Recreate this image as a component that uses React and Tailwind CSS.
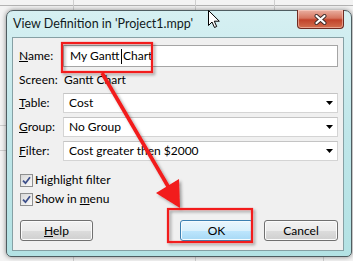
import React from 'react';

// background gridlines of the spreadsheet behind the dialog
function Backdrop() {
  return (
    <svg className="absolute inset-0" width="353" height="261">
      <rect width="353" height="261" fill="#f3f3f3" />
      <line x1="0" y1="5.5" x2="353" y2="5.5" stroke="#b4b4b4" />
      <line x1="73.5" y1="0" x2="73.5" y2="261" stroke="#cfcfcf" />
      <line x1="195.5" y1="0" x2="195.5" y2="261" stroke="#cfcfcf" />
      <line x1="274.5" y1="0" x2="274.5" y2="10" stroke="#cfcfcf" />
      <line x1="323.5" y1="250" x2="323.5" y2="261" stroke="#cfcfcf" />
      <line x1="0" y1="125.5" x2="6" y2="125.5" stroke="#cfcfcf" />
      <line x1="0" y1="150.5" x2="6" y2="150.5" stroke="#cfcfcf" />
    </svg>
  );
}

function Select({ value }) {
  return (
    <div className="flex h-[20px] flex-1 items-center justify-between border border-[#d4d4d4] border-t-[#c4c4c4] bg-white pl-[5px] pr-[4px]">
      <span>{value}</span>
      <svg width="7" height="4" viewBox="0 0 7 4">
        <path d="M0 0h7L3.5 4z" fill="#000" />
      </svg>
    </div>
  );
}

function Row({ u, rest, children, className }) {
  return (
    <div className={'flex items-center ' + className}>
      <span className="w-[44px] shrink-0 whitespace-nowrap">
        {u ? <span className="underline">{u}</span> : null}
        {rest}
      </span>
      {children}
    </div>
  );
}

function Check({ children }) {
  return (
    <div className="flex h-[16px] items-center">
      <div className="ml-[1px] flex h-[13px] w-[13px] items-center justify-center border border-[#8e8f8f] bg-gradient-to-br from-[#d8d8d8] to-[#fafafa]">
        <svg width="9" height="9" viewBox="0 0 9 9">
          <path d="M1 4.6L3.5 7.2L8 1.3" fill="none" stroke="#3d4f8a" strokeWidth="1.8" />
        </svg>
      </div>
      <span className="ml-[2px]">{children}</span>
    </div>
  );
}

function Annotations() {
  return (
    <svg className="pointer-events-none absolute inset-0" width="353" height="261">
      <defs>
        <filter id="sh" x="-20%" y="-20%" width="140%" height="140%">
          <feDropShadow dx="2" dy="2" stdDeviation="1.5" floodColor="#000" floodOpacity="0.35" />
        </filter>
      </defs>
      <g filter="url(#sh)">
        <rect x="62" y="43" width="90" height="29" fill="none" stroke="#f21a1a" strokeWidth="2.2" />
        <rect x="168" y="209" width="84" height="33" fill="none" stroke="#f21a1a" strokeWidth="2.2" />
        <line x1="102" y1="73" x2="169" y2="188" stroke="#f21a1a" strokeWidth="3.6" />
        <path d="M156 193L179 179L180 208z" fill="#f21a1a" />
      </g>
      {/* mouse pointer */}
      <path
        d="M208.5 10.5v15l3.5-3.5 2.5 5.5 2.2-1-2.4-5.3h5z"
        fill="#fff"
        stroke="#000"
        strokeWidth="1"
        strokeLinejoin="round"
      />
    </svg>
  );
}

export default function App() {
  return (
    <div className="relative h-[261px] w-[353px] overflow-hidden font-['Lato',sans-serif] text-[12px] leading-[16px] text-black">
      <Backdrop />
      <div className="relative ml-[6px] mt-[10px] flex h-[247px] w-[346px] flex-col rounded-t-[7px] rounded-b-[5px] border border-[#4f5d61] bg-gradient-to-b from-[#d6f0f2] via-[#bfe6e9] to-[#b3e2e4] shadow-[0_0_5px_rgba(0,0,0,0.45)]">
        <div className="flex h-[26px] shrink-0 items-start justify-between">
          <span className="self-center pl-[6px] text-[12.5px] text-[#111a1c]">View Definition in 'Project1.mpp'</span>
          <div className="mr-[7px] -mt-px flex h-[19px] w-[47px] items-center justify-center rounded-b-[4px] border border-t-0 border-[#6e2b22] bg-[linear-gradient(#eab0a2,#d6755f_45%,#c2432b_55%,#d2704f)] shadow-[inset_0_0_0_1px_rgba(255,220,210,0.5)]">
            <svg width="13" height="11" viewBox="0 0 13 11">
              <path d="M2.5 2L10.5 9M10.5 2L2.5 9" stroke="#3b2a28" strokeWidth="4" strokeLinecap="round" />
              <path d="M2.5 2L10.5 9M10.5 2L2.5 9" stroke="#fff" strokeWidth="2.2" strokeLinecap="round" />
            </svg>
          </div>
        </div>
        <div className="mb-[5px] ml-[5px] mr-[7px] flex h-[214px] flex-col border border-[#86a0a4] bg-[#f0f0f0] pl-[6px] pr-[5px] pt-[7px]">
          <Row u="N" rest="ame:" className="h-[22px]">
            <div className="flex h-[22px] flex-1 items-center border border-[#a5a5a5] bg-white pl-[6px]">
              <span>My Gantt</span>
              <span className="ml-[1.5px] mr-px inline-block h-[15px] w-px bg-black" />
              <span>Chart</span>
            </div>
          </Row>
          <Row rest="Screen:" className="mt-[3px] h-[20px]">
            <span className="pl-[1px]">Gantt Chart</span>
          </Row>
          <Row u="T" rest="able:" className="mt-[3px]">
            <Select value="Cost" />
          </Row>
          <Row u="G" rest="roup:" className="mt-[4px]">
            <Select value="No Group" />
          </Row>
          <Row u="F" rest="ilter:" className="mt-[4px]">
            <Select value="Cost greater then $2000" />
          </Row>
          <div className="mt-[11px]">
            <Check>Highlight filter</Check>
          </div>
          <div className="mt-[3px]">
            <Check>
              Show in <span className="underline">m</span>enu
            </Check>
          </div>
          <div className="mt-[13px] flex items-center">
            <button className="ml-[1px] h-[21px] w-[73px] rounded-[3px] border border-[#707070] bg-[linear-gradient(#f2f2f2,#ebebeb_50%,#dddddd_50%,#cfcfcf)] shadow-[inset_0_0_0_1px_#fbfbfb]">
              <span className="underline">H</span>elp
            </button>
            <button className="ml-auto h-[21px] w-[73px] rounded-[3px] border border-[#3c7fb1] bg-[linear-gradient(#eaf6fd,#d9f0fc_50%,#bee6fd_50%,#a7d9f5)] shadow-[inset_0_0_0_1px_#f4fbfe]">
              OK
            </button>
            <button className="ml-[11px] h-[21px] w-[74px] rounded-[3px] border border-[#707070] bg-[linear-gradient(#f2f2f2,#ebebeb_50%,#dddddd_50%,#cfcfcf)] shadow-[inset_0_0_0_1px_#fbfbfb]">
              Cancel
            </button>
          </div>
        </div>
      </div>
      <Annotations />
    </div>
  );
}
